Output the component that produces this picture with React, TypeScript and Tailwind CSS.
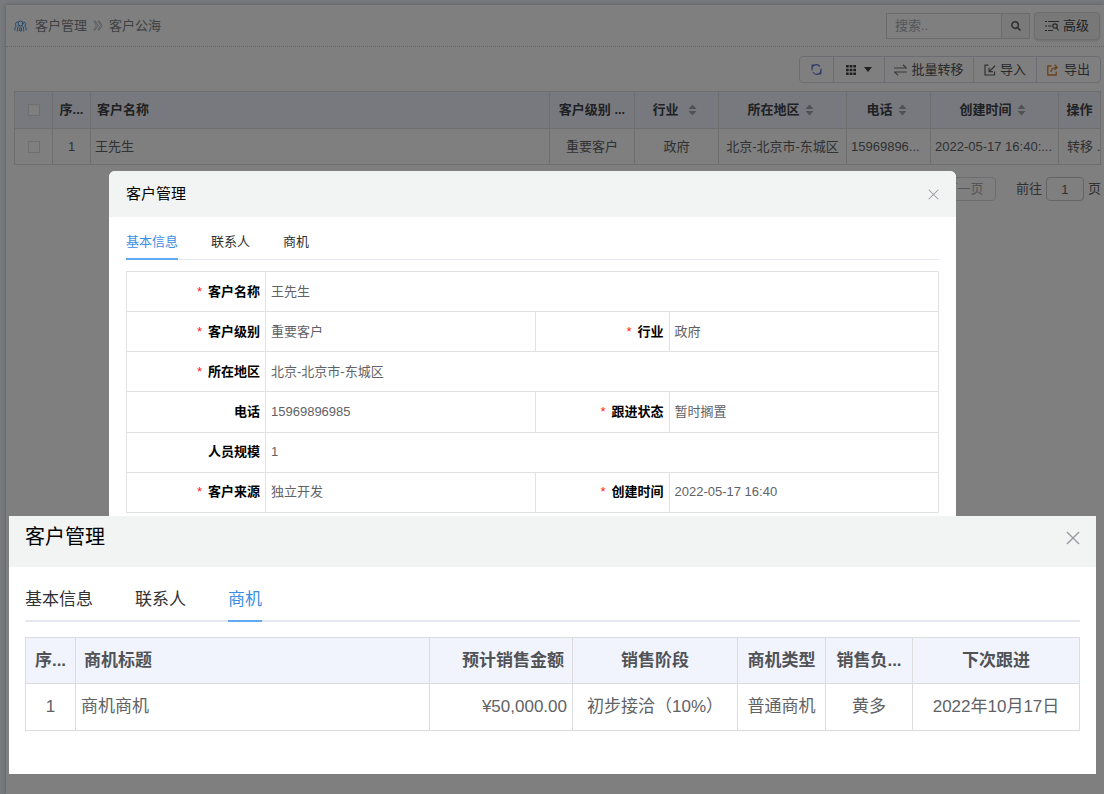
import React from 'react';
import { FaSearch } from 'react-icons/fa';

const CustomerIcon: React.FC = () => (
  <svg width="13" height="12" viewBox="0 0 26 24" fill="none" stroke="#3b8de0" strokeWidth="2" strokeLinecap="round">
    <circle cx="13" cy="7" r="5" />
    <path d="M9.500 11.500C7.500 13.500 6.500 17 6.500 22M16.500 11.500c2 2 3 5.500 3 10.500M12 15l-1.500 6.500h5L14 15" />
    <path d="M6.500 4C2.500 4 1.500 9 4.500 12 2.500 13.500 1.500 16.500 1.500 20M19.500 4c4 0 5 5 2 8 2 1.500 3 4.500 3 8" />
  </svg>
);

const BreadcrumbIcon: React.FC = () => (
  <svg width="10" height="11" viewBox="0 0 10 11" fill="none" stroke="#b8babf" strokeWidth="1">
    <path d="M.8 1h1.400l3 4.500-3 4.500H.8l2.600-4.500zM5 1h1.200l3 4.500-3 4.500H5l2.600-4.500z" />
  </svg>
);

const AdvancedIcon: React.FC = () => (
  <svg width="14" height="12" viewBox="0 0 14 12" fill="none" stroke="#505050" strokeWidth="1.200">
    <path d="M0 1.500h2M3 1.500h11M0 6h2M3 6h3.500M0 10.500h2M3 10.500h5" />
    <circle cx="10" cy="6" r="2.200" />
    <path d="M11.500 7.700l2 2.800" />
  </svg>
);

const RefreshIcon: React.FC = () => (
  <svg width="11" height="11" viewBox="0 0 11 11" fill="none" stroke="#6078d0" strokeWidth="1.200">
    <path d="M1 6.500V5A4.300 4.300 0 0 1 9 2.800M10 4.500V6a4.300 4.300 0 0 1-8 2.200" />
    <path d="M3.500 1.200H1.200v2.600M7.500 9.800h2.300V7.200" />
  </svg>
);

const GridIcon: React.FC = () => (
  <svg width="10" height="10" viewBox="0 0 10 10" fill="#404040">
    <path d="M0 0h2.700v2.500H0zM3.600 0h2.800v2.500H3.600zM7.300 0H10v2.500H7.300zM0 3.700h2.700v2.600H0zM3.600 3.700h2.800v2.600H3.600zM7.300 3.700H10v2.600H7.300zM0 7.500h2.700V10H0zM3.600 7.500h2.800V10H3.600zM7.300 7.500H10V10H7.300z" />
  </svg>
);

const CaretIcon: React.FC = () => (
  <svg width="8" height="5" viewBox="0 0 8 5" fill="#404040">
    <path d="M0 0h8L4 5z" />
  </svg>
);

const TransferIcon: React.FC = () => (
  <svg width="13" height="12" viewBox="0 0 13 12" fill="none" stroke="#707276" strokeWidth="1.200">
    <path d="M0 4h12.500L9 .8M13 8H.5L4 11.200" />
  </svg>
);

const ImportIcon: React.FC = () => (
  <svg width="12" height="12" viewBox="0 0 12 12" fill="none" stroke="#606266" strokeWidth="1.200">
    <path d="M4.500 1.200H1v9.800h9.500V7.500M11.200 1.800L5.500 7.200M5 3.800v3.800h3.800" />
  </svg>
);

const ExportIcon: React.FC = () => (
  <svg width="11" height="12" viewBox="0 0 11 12" fill="none" stroke="#d88430" strokeWidth="1.300">
    <path d="M4.500 2H.8v9h8.400V7.500M4 8c0-3 2-4.500 6-4.700M7.500.8L10.200 3.300 7.500 5.800" />
  </svg>
);

const SortIcon: React.FC = () => (
  <svg className="shrink-0" width="9" height="12" viewBox="0 0 9 12" fill="#a0a2a8">
    <path d="M4.500 .5L8.500 5H.5zM4.500 11.500L.5 7h8z" />
  </svg>
);

const CloseIcon: React.FC<{ size: number }> = ({ size }) => (
  <svg width={size} height={size} viewBox="0 0 12 12" fill="none" stroke="#94979d" strokeWidth="1.100">
    <path d="M.8.8l10.400 10.400M11.200.8L.8 11.200" />
  </svg>
);

const TABS = ['基本信息', '联系人', '商机'];

const SORT_COLUMNS = [
  { label: '行业', gap: 'gap-[9px]' },
  { label: '所在地区', gap: 'gap-[5px]' },
  { label: '电话', gap: 'gap-[5px]' },
  { label: '创建时间', gap: 'gap-[5px]' },
];

interface Field {
  label: string;
  value: string;
  required?: boolean;
}

const FIELD_ROWS: Field[][] = [
  [{ label: '客户名称', value: '王先生', required: true }],
  [
    { label: '客户级别', value: '重要客户', required: true },
    { label: '行业', value: '政府', required: true },
  ],
  [{ label: '所在地区', value: '北京-北京市-东城区', required: true }],
  [
    { label: '电话', value: '15969896985' },
    { label: '跟进状态', value: '暂时搁置', required: true },
  ],
  [{ label: '人员规模', value: '1' }],
  [
    { label: '客户来源', value: '独立开发', required: true },
    { label: '创建时间', value: '2022-05-17 16:40', required: true },
  ],
];

const CustomerPage: React.FC = () => (
  <div className="min-h-screen bg-[#f0f2fa] pl-[6px] pt-[5px] text-[13px] leading-5 text-[#606266]">
    <main className="min-h-[789px] bg-white shadow-[0_0_4px_#b0b2b8]">
      <header className="flex h-[42px] items-center border-b border-dotted border-[#c8cad0] pl-2 pr-1">
        <CustomerIcon />
        <nav className="ml-2 flex items-center gap-[6px] text-[#808285]">
          <a href="#customer">客户管理</a>
          <BreadcrumbIcon />
          <a href="#public">客户公海</a>
        </nav>
        <div className="ml-auto flex h-[26px] w-36 border border-[#d4d6da]">
          <input aria-label="搜索" placeholder="搜索.." className="w-0 flex-1 px-2 outline-none placeholder:text-[#a8abb2]" />
          <button aria-label="搜索" className="flex w-7 items-center justify-center border-l border-[#d4d6da] bg-[#f5f5f5]">
            <FaSearch size={10} color="#606060" />
          </button>
        </div>
        <button className="ml-1 flex h-7 w-[66px] items-center justify-center gap-1 rounded-sm border border-[#d8dadd] bg-[#f0f0f0] text-[#404246] shadow-sm">
          <AdvancedIcon />
          高级
        </button>
      </header>

      <section className="pl-2 pr-[3px] pt-[9px]">
        <div className="ml-auto flex h-[27px] w-[302px] divide-x divide-[#d8dae4] rounded-sm border border-[#d8dae4] text-[#505256]">
          <button aria-label="刷新" className="flex w-[34px] items-center justify-center"><RefreshIcon /></button>
          <button aria-label="列设置" className="flex w-[51px] items-center justify-center gap-2"><GridIcon /><CaretIcon /></button>
          <button className="flex w-[89px] items-center justify-center gap-1"><TransferIcon />批量转移</button>
          <button className="flex w-[63px] items-center justify-center gap-1"><ImportIcon />导入</button>
          <button className="flex flex-1 items-center justify-center gap-[6px]"><ExportIcon />导出</button>
        </div>

        <table className="mt-2 w-full table-fixed border-collapse whitespace-nowrap text-center [&_td]:overflow-hidden [&_td]:border [&_td]:border-[#dcdcdc] [&_th]:overflow-hidden [&_th]:border [&_th]:border-[#dcdcdc]">
          <colgroup>
            <col className="w-[38px]" />
            <col className="w-[38px]" />
            <col />
            <col className="w-[85px]" />
            <col className="w-[84px]" />
            <col className="w-[128px]" />
            <col className="w-[84px]" />
            <col className="w-[128px]" />
            <col className="w-[42px]" />
          </colgroup>
          <thead>
            <tr className="h-[37px] bg-[#f0f3fc] text-[#404246]">
              <th><input type="checkbox" aria-label="全选" className="mx-auto block size-3 appearance-none border border-[#dcdfe6] bg-white" /></th>
              <th>序...</th>
              <th className="pl-[6px] text-left">客户名称</th>
              <th>客户级别 ...</th>
              {SORT_COLUMNS.map((col) => (
                <th key={col.label} className="pr-1">
                  <div className={`flex items-center justify-center ${col.gap}`}>
                    {col.label}
                    <SortIcon />
                  </div>
                </th>
              ))}
              <th>操作</th>
            </tr>
          </thead>
          <tbody>
            <tr className="h-9">
              <td><input type="checkbox" aria-label="选择王先生" className="mx-auto block size-3 appearance-none border border-[#dcdfe6] bg-white" /></td>
              <td>1</td>
              <td className="pl-1 text-left">王先生</td>
              <td>重要客户</td>
              <td>政府</td>
              <td>北京-北京市-东城区</td>
              <td className="pl-1 text-left">15969896...</td>
              <td className="pl-1 text-left">2022-05-17 16:40:...</td>
              <td className="pl-2 text-left"><a href="#transfer">转移</a> .</td>
            </tr>
          </tbody>
        </table>

        <div className="mt-3 flex h-6 items-center justify-end">
          <button className="mr-5 h-6 w-16 rounded-sm border border-[#d8dae0] text-[#a8abb2]">下一页</button>
          <label htmlFor="page-no">前往</label>
          <input id="page-no" defaultValue="1" className="mx-1 h-6 w-[38px] rounded-sm border border-[#c8cad0] text-center outline-none" />
          页
        </div>
      </section>
    </main>
  </div>
);

const DetailDialog: React.FC = () => (
  <section role="dialog" aria-label="客户详情" className="ml-[109px] mr-[148px] h-[345px] rounded-t-md bg-white text-[13px] leading-5 text-[#606266]">
    <header className="flex h-[46px] items-center justify-between rounded-t-md bg-[#f2f4f4] px-[17px]">
      <h2 className="text-[15px] text-black">客户管理</h2>
      <button aria-label="关闭"><CloseIcon size={11} /></button>
    </header>
    <div className="px-[17px]">
      <div role="tablist" className="flex h-[43px] gap-[33px] border-b border-[#e4e7ed] text-[#303133]">
        {TABS.map((tab, i) => (
          <button
            key={tab}
            role="tab"
            aria-selected={i === 0}
            className={i === 0 ? 'h-[43px] border-b-2 border-[#61aaf2] pt-2 text-[#3a8ee6]' : 'h-[43px] border-b-2 border-transparent pt-2'}
          >
            {tab}
          </button>
        ))}
      </div>
      <table className="mt-[11px] h-[242px] w-full table-fixed border-collapse [&_td]:border [&_td]:border-[#e0e2e6] [&_th]:border [&_th]:border-[#e0e2e6]">
        <colgroup>
          <col className="w-[139px]" />
          <col />
          <col className="w-[134px]" />
          <col />
        </colgroup>
        <tbody>
          {FIELD_ROWS.map((row) => (
            <tr key={row[0].label}>
              {row.map((field) => (
                <React.Fragment key={field.label}>
                  <th className="pr-[5px] text-right text-black">
                    {field.required && <span className="mr-[6px] font-normal text-[#ff2020]">*</span>}
                    {field.label}
                  </th>
                  <td colSpan={row.length === 1 ? 3 : 1} className="pl-[5px]">{field.value}</td>
                </React.Fragment>
              ))}
            </tr>
          ))}
        </tbody>
      </table>
    </div>
  </section>
);

const OpportunityDialog: React.FC = () => (
  <section role="dialog" aria-label="客户商机" className="ml-[9px] mr-2 h-[258px] bg-white text-[17px] leading-6 text-[#606266]">
    <header className="flex h-[51px] items-start justify-between bg-[#f2f4f4] px-4 pt-[9px]">
      <h2 className="text-[20px] text-black">客户管理</h2>
      <button aria-label="关闭" className="mt-[6px]"><CloseIcon size={14} /></button>
    </header>
    <div className="px-4">
      <div role="tablist" className="flex h-[55px] gap-[42px] border-b-2 border-[#e4e7ed] text-[#303133]">
        {TABS.map((tab, i) => (
          <button
            key={tab}
            role="tab"
            aria-selected={i === 2}
            className={i === 2 ? 'h-[55px] border-b-2 border-[#61aaf2] pt-3 text-[#3a8ee6]' : 'h-[55px] border-b-2 border-transparent pt-3'}
          >
            {tab}
          </button>
        ))}
      </div>
      <table className="mt-[15px] w-full table-fixed border-collapse whitespace-nowrap text-center [&_td]:border [&_td]:border-[#dcdcdc] [&_th]:border [&_th]:border-[#dcdcdc]">
        <colgroup>
          <col className="w-[50px]" />
          <col />
          <col className="w-[143px]" />
          <col className="w-[165px]" />
          <col className="w-[88px]" />
          <col className="w-[87px]" />
          <col className="w-[167px]" />
        </colgroup>
        <thead>
          <tr className="h-[46px] bg-[#f1f4fd] text-[#505256]">
            <th>序...</th>
            <th className="pl-2 text-left">商机标题</th>
            <th className="pr-2 text-right">预计销售金额</th>
            <th>销售阶段</th>
            <th>商机类型</th>
            <th>销售负...</th>
            <th>下次跟进</th>
          </tr>
        </thead>
        <tbody>
          <tr className="h-[47px]">
            <td>1</td>
            <td className="pl-[5px] text-left">商机商机</td>
            <td className="pr-[5px] text-right">¥50,000.00</td>
            <td>初步接洽（10%）</td>
            <td>普通商机</td>
            <td>黄多</td>
            <td>2022年10月17日</td>
          </tr>
        </tbody>
      </table>
    </div>
  </section>
);

const App: React.FC = () => {
  return (
    <div className="relative font-['Liberation_Sans','Noto_Sans_CJK_SC',sans-serif]">
      <CustomerPage />
      <div className="absolute inset-0 bg-black/50 pt-[171px]">
        <DetailDialog />
        <OpportunityDialog />
      </div>
    </div>
  );
};

export default App;
